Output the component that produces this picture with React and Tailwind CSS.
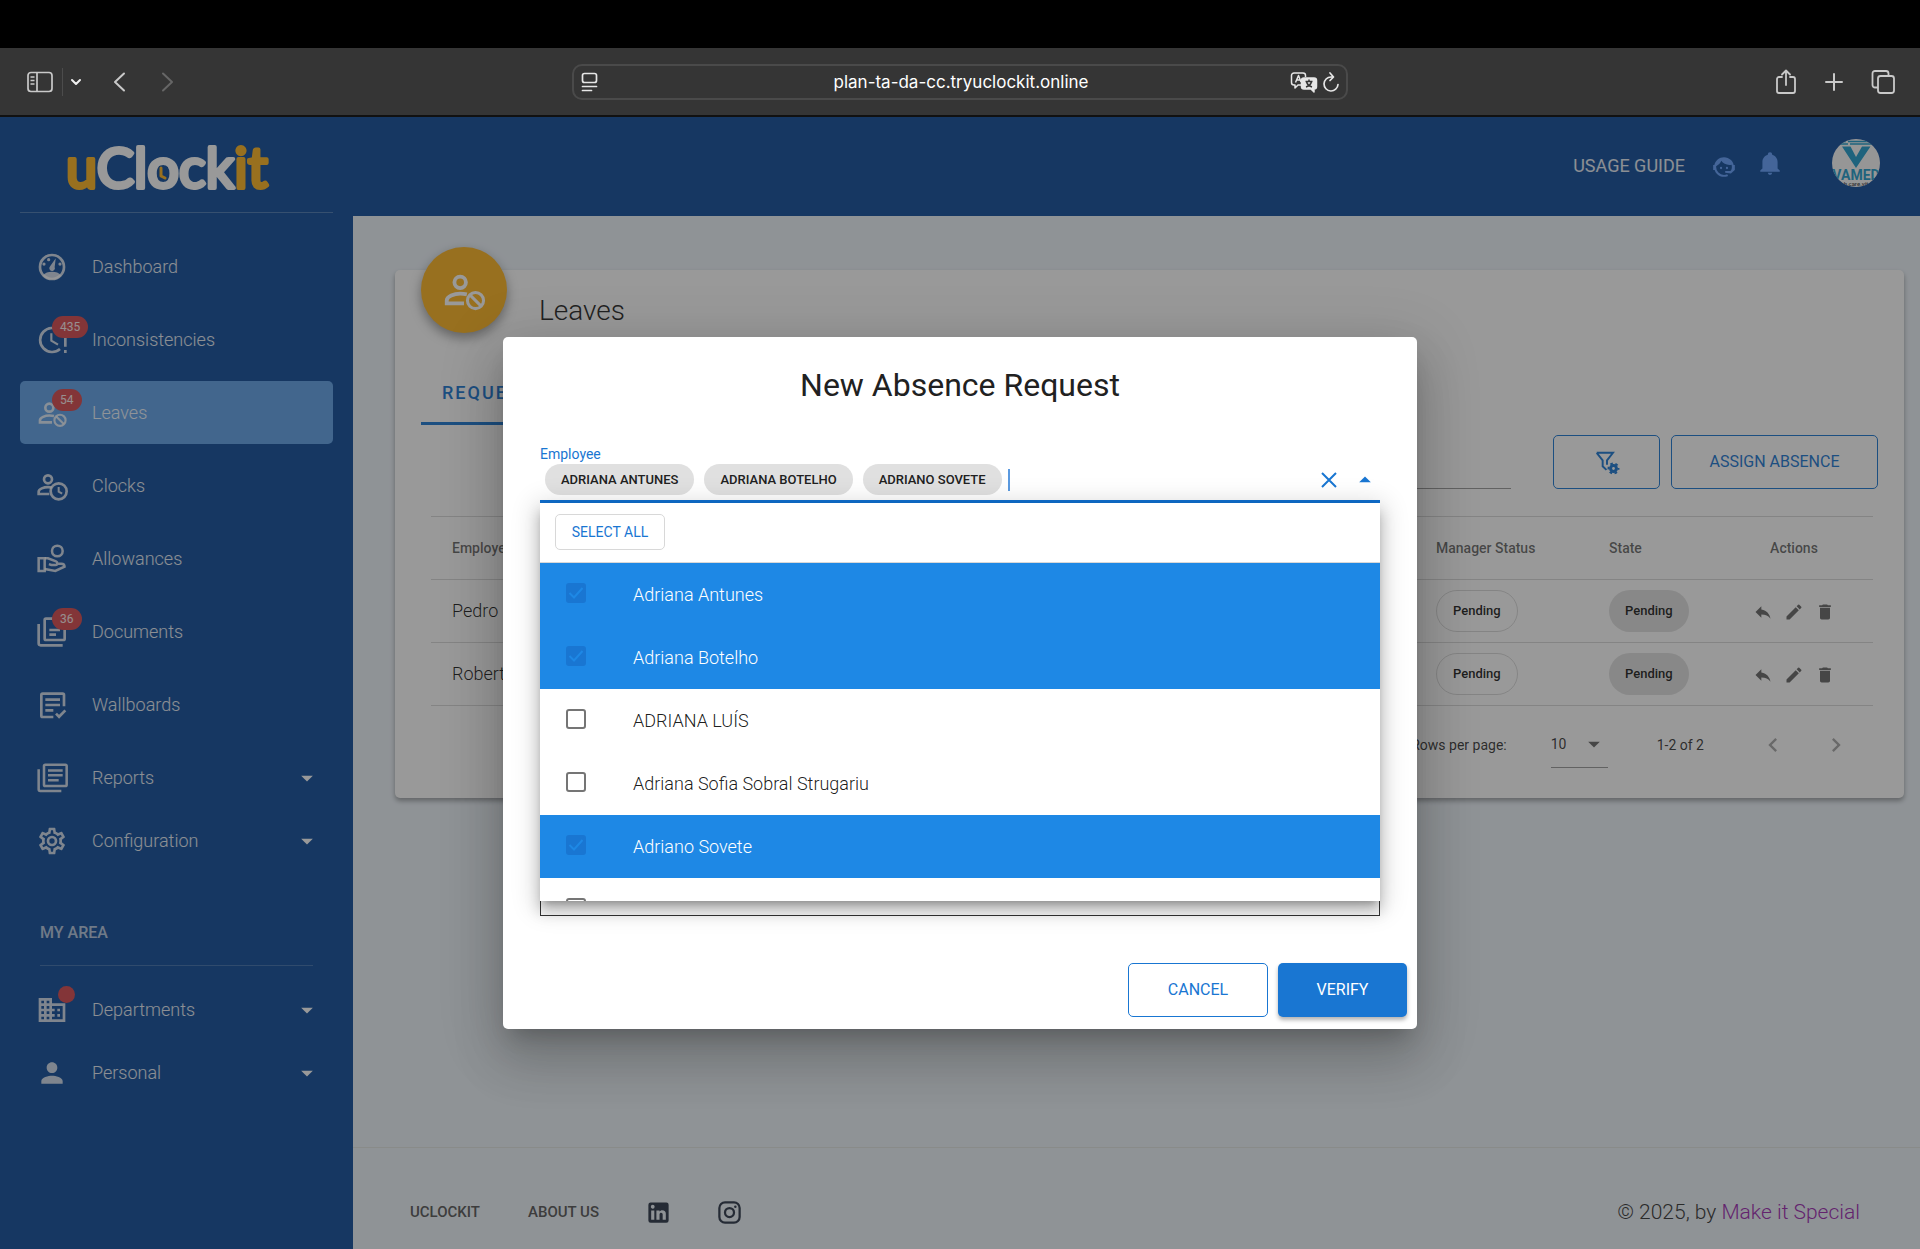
import React, { useState } from 'react';
import {
  MdArrowDropDown,
  MdArrowDropUp,
  MdChevronLeft,
  MdChevronRight,
  MdDelete,
  MdDomain,
  MdEdit,
  MdPerson,
  MdReply,
} from 'react-icons/md';

// Small wrapper for the outlined 24x24 icons
function Icon({ className, width = 2, children }) {
  return (
    <svg viewBox="0 0 24 24" className={className} fill="none" stroke="currentColor" strokeWidth={width} aria-hidden="true">
      {children}
    </svg>
  );
}

function GaugeIcon({ className }) {
  return (
    <Icon className={className}>
      <circle cx="12" cy="12" r="9" />
      <path d="M5 18.5c2-2.300 4-2.900 7-2.900s5 .6 7 2.900c-2 2.200-4 2.900-7 2.900s-5-.7-7-2.900z" fill="currentColor" stroke="none" />
      <path d="M14.8 5.500 14 12a2.100 2.100 0 1 1-3.400-.6z" fill="currentColor" stroke="none" />
      <g fill="currentColor" stroke="none">
        <circle cx="6" cy="9.8" r="1.2" />
        <circle cx="9.5" cy="6.5" r="1.2" />
        <circle cx="18" cy="9.8" r="1.2" />
      </g>
    </Icon>
  );
}

function ClockAlertIcon({ className }) {
  return (
    <Icon className={className}>
      <path d="M18 5.2A9 9 0 1 0 18 18.8" />
      <path d="M11.5 7v5.500l5 3" strokeWidth="1.600" />
      <path d="M22 9v8M22 19.5v2.300" />
    </Icon>
  );
}

function PersonCancelIcon({ className }) {
  return (
    <Icon className={className}>
      <circle cx="10" cy="8" r="3" />
      <path d="M13.5 14.3C12.400 14.050 11.200 13.900 10 13.900c-3.100 0-7 1.500-7 3.600V19h9" />
      <circle cx="18" cy="17.5" r="4.2" strokeWidth="1.600" />
      <path d="m15.2 14.7 5.600 5.600" strokeWidth="1.600" />
    </Icon>
  );
}

function PersonClockIcon({ className }) {
  return (
    <Icon className={className}>
      <circle cx="9" cy="7" r="3" />
      <path d="M12 13.1c-1-.2-2-.3-3-.3-3.100 0-7 1.400-7 3.500V18h8" />
      <circle cx="17" cy="16" r="6" />
      <path d="M17 12.8V16.200l2.600 1.500" strokeWidth="1.500" />
    </Icon>
  );
}

function HandCoinIcon({ className }) {
  return (
    <Icon className={className} width="1.900">
      <circle cx="16" cy="6" r="4" />
      <path d="M2 11.5h4.500V21H2z" />
      <path d="M6.5 11.5H9l6 2.300c1.200.5 1.500 2.700-.4 2.700H11.500l-1.800-.7M15.800 15.500H19c1.500 0 2.400 1 2.400 2.300L14.500 21 6.500 19.500" />
    </Icon>
  );
}

function DocumentsIcon({ className }) {
  return (
    <Icon className={className}>
      <path d="M2 6v14.500c0 .8.500 1.500 1.500 1.500H20" />
      <path d="M7.5 2H16l5.500 5.500V17c0 .6-.4 1-1 1h-13c-.6 0-1-.4-1-1V3c0-.6.4-1 1-1z" />
      <path d="M10 10.5h8M10 14h5" />
    </Icon>
  );
}

function WallboardsIcon({ className }) {
  return (
    <Icon className={className}>
      <path d="M13 21H5c-.6 0-1-.4-1-1V4.500c0-.6.4-1 1-1h15c.6 0 1 .4 1 1V13" />
      <path d="M7 8h11M7 12h11M7 16h6M15 18.5l2.300 2.300L22 16" />
    </Icon>
  );
}

function ReportsIcon({ className }) {
  return (
    <Icon className={className} width="1.900">
      <path d="M2 5.5v15c0 .7.4 1.200 1.200 1.200H19" />
      <rect x="6" y="2" width="17" height="16" rx="1" />
      <path d="M9 6.3h11M9 10h11M9 13.700h8" />
    </Icon>
  );
}

function CogIcon({ className }) {
  return (
    <svg viewBox="0 0 24 24" className={className} fill="currentColor" aria-hidden="true">
      <path d="M12,8A4,4 0 0,1 16,12A4,4 0 0,1 12,16A4,4 0 0,1 8,12A4,4 0 0,1 12,8M12,10A2,2 0 0,0 10,12A2,2 0 0,0 12,14A2,2 0 0,0 14,12A2,2 0 0,0 12,10M10,22C9.75,22 9.54,21.82 9.5,21.58L9.13,18.93C8.5,18.68 7.96,18.34 7.44,17.94L4.95,18.95C4.73,19.03 4.46,18.95 4.34,18.73L2.34,15.27C2.21,15.05 2.27,14.78 2.46,14.63L4.57,12.97L4.5,12L4.57,11L2.46,9.37C2.27,9.22 2.21,8.95 2.34,8.73L4.34,5.27C4.46,5.05 4.73,4.96 4.95,5.05L7.44,6.05C7.96,5.66 8.5,5.32 9.13,5.07L9.5,2.42C9.54,2.18 9.75,2 10,2H14C14.25,2 14.46,2.18 14.5,2.42L14.87,5.07C15.5,5.32 16.04,5.66 16.56,6.05L19.05,5.05C19.27,4.96 19.54,5.05 19.66,5.27L21.66,8.73C21.79,8.95 21.73,9.22 21.54,9.37L19.43,11L19.5,12L19.43,13L21.54,14.63C21.73,14.78 21.79,15.05 21.66,15.27L19.66,18.73C19.54,18.95 19.27,19.04 19.05,18.95L16.56,17.95C16.04,18.34 15.5,18.68 14.87,18.93L14.5,21.58C14.46,21.82 14.25,22 14,22H10M11.25,4L10.88,6.61C9.68,6.86 8.62,7.5 7.85,8.39L5.44,7.35L4.69,8.65L6.8,10.2C6.4,11.37 6.4,12.64 6.8,13.8L4.68,15.36L5.43,16.66L7.86,15.62C8.63,16.5 9.68,17.14 10.87,17.38L11.24,20H12.76L13.13,17.39C14.32,17.14 15.37,16.5 16.14,15.62L18.57,16.66L19.32,15.36L17.2,13.81C17.6,12.64 17.6,11.37 17.2,10.2L19.31,8.65L18.56,7.35L16.15,8.39C15.38,7.5 14.32,6.86 13.12,6.62L12.75,4H11.25Z" />
    </svg>
  );
}

function AgentIcon({ className }) {
  return (
    <svg viewBox="0 0 24 24" className={className} fill="currentColor" aria-hidden="true">
      <path d="M18.72,14.76C19.07,13.91 19.26,13 19.26,12C19.26,11.28 19.15,10.59 18.96,9.95C18.31,10.1 17.63,10.18 16.92,10.18C13.86,10.18 11.15,8.67 9.5,6.34C8.61,8.5 6.91,10.26 4.77,11.22C4.73,11.47 4.73,11.74 4.73,12A7.27,7.27 0 0,0 12,19.27C13.05,19.27 14.06,19.04 14.97,18.63C15.54,19.72 15.8,20.26 15.78,20.26C14.14,20.81 12.87,21.08 12,21.08C9.58,21.08 7.27,20.13 5.57,18.42C4.53,17.38 3.76,16.11 3.33,14.73H2V10.18H3.09C3.93,6.04 7.6,2.92 12,2.92C14.4,2.92 16.71,3.87 18.42,5.58C19.69,6.84 20.54,8.45 20.89,10.18H22V14.73H21.94L18.38,18L13.08,17.4V15.73H17.91L18.72,14.76M9.27,11.77A1.14,1.14 0 0,1 9.27,14.04A1.14,1.14 0 0,1 9.27,11.77M14.72,11.77A1.14,1.14 0 0,1 14.72,14.04A1.14,1.14 0 0,1 14.72,11.77Z" />
    </svg>
  );
}

function BellIcon({ className }) {
  return (
    <svg viewBox="0 0 24 24" className={className} fill="currentColor" aria-hidden="true">
      <path d="M21,19V20H3V19L5,17V11C5,7.9 7.03,5.17 10,4.29C10,4.19 10,4.1 10,4A2,2 0 0,1 12,2A2,2 0 0,1 14,4C14,4.1 14,4.19 14,4.29C16.97,5.17 19,7.9 19,11V17L21,19M14,21A2,2 0 0,1 12,23A2,2 0 0,1 10,21" />
    </svg>
  );
}

function FilterCogIcon({ className }) {
  return (
    <Icon className={className} width="1.800">
      <path d="M2.5 3.5h15l-5.500 7v4M2.500 3.500l5.500 7v5.500l3.500 3.300" />
      <circle cx="18" cy="18" r="2.7" strokeWidth="2.800" />
      <circle cx="18" cy="18" r="4.6" strokeDasharray="2.4 2.417" strokeDashoffset="1.2" />
    </Icon>
  );
}

function Logo() {
  return (
    <svg viewBox="0 0 220 76" className="h-[76px] w-[220px]" role="img" aria-label="uClockit">
      <g fontFamily="Lato, sans-serif" fontWeight="400" fontSize="56" strokeWidth="4" strokeLinejoin="round">
        <text x="0" y="61">
          <tspan fill="#feb41e" stroke="#feb41e">u</tspan>
          <tspan fill="#fff" stroke="#fff">Clock</tspan>
          <tspan fill="#feb41e" stroke="#feb41e">it</tspan>
        </text>
      </g>
      <path d="M95 41v8l4 2" fill="none" stroke="#feb41e" strokeWidth="3" strokeLinecap="round" strokeLinejoin="round" />
    </svg>
  );
}

const mainNav = [
  { label: 'Dashboard', icon: GaugeIcon },
  { label: 'Inconsistencies', icon: ClockAlertIcon, badge: 435 },
  { label: 'Leaves', icon: PersonCancelIcon, badge: 54, active: true },
  { label: 'Clocks', icon: PersonClockIcon },
  { label: 'Allowances', icon: HandCoinIcon },
  { label: 'Documents', icon: DocumentsIcon, badge: 36 },
  { label: 'Wallboards', icon: WallboardsIcon },
];

const groupNav = [
  { label: 'Reports', icon: ReportsIcon, group: true },
  { label: 'Configuration', icon: CogIcon, group: true },
];

const myAreaNav = [
  { label: 'Departments', icon: MdDomain, group: true, dot: true },
  { label: 'Personal', icon: MdPerson, group: true },
];

const leaves = [
  { employee: 'Pedro', manager: 'Pending', state: 'Pending' },
  { employee: 'Roberto', manager: 'Pending', state: 'Pending' },
];

const employees = [
  { id: 1, name: 'Adriana Antunes' },
  { id: 2, name: 'Adriana Botelho' },
  { id: 3, name: 'ADRIANA LUÍS' },
  { id: 4, name: 'Adriana Sofia Sobral Strugariu' },
  { id: 5, name: 'Adriano Sovete' },
  { id: 6, name: '' },
];

function BrowserBar() {
  return (
    <div className="flex h-[69px] items-center justify-between border-b-2 border-[#111] bg-[#353535] px-6 text-[#c9c9c9]">
      <div className="flex w-[500px] items-center">
        <button type="button" aria-label="Sidebar">
          <svg viewBox="0 0 32 26" className="h-[26px] w-8" fill="none" stroke="currentColor" strokeWidth="1.700" aria-hidden="true">
            <rect x="4" y="3.5" width="24" height="19" rx="3" />
            <path d="M13 3.5v19" />
            <path d="M6.500 8h4M6.500 11.500h4M6.500 15h4" strokeWidth="1.400" />
          </svg>
        </button>
        <span className="mr-[7px] ml-1.5 h-7 w-px bg-[#4c4c4c]" />
        <button type="button" aria-label="Tab groups">
          <svg viewBox="0 0 12 12" className="h-3 w-3" fill="none" stroke="#f0f0f0" strokeWidth="2" strokeLinecap="round" strokeLinejoin="round" aria-hidden="true">
            <path d="M2 4l4 4 4-4" />
          </svg>
        </button>
        <button type="button" aria-label="Back" className="ml-7">
          <svg viewBox="0 0 20 26" className="h-[26px] w-5" fill="none" stroke="currentColor" strokeWidth="2" strokeLinecap="round" strokeLinejoin="round" aria-hidden="true">
            <path d="M14 4.500l-9 8.500 9 8.500" />
          </svg>
        </button>
        <button type="button" aria-label="Forward" className="ml-7">
          <svg viewBox="0 0 20 26" className="h-[26px] w-5" fill="none" stroke="#666" strokeWidth="2" strokeLinecap="round" strokeLinejoin="round" aria-hidden="true">
            <path d="M5 4.500l9 8.500-9 8.500" />
          </svg>
        </button>
      </div>

      <div className="flex h-9 w-[776px] items-center justify-between rounded-[10px] border-2 border-[#4a4a4a] px-1.5 text-[#e6e6e6]">
        <svg viewBox="0 0 20 22" className="h-[22px] w-5" fill="none" stroke="currentColor" strokeWidth="1.700" strokeLinecap="round" aria-hidden="true">
          <rect x="2.5" y="2.5" width="14" height="9" rx="2" />
          <path d="M2.500 15.500h14M2.500 19.500h9" />
        </svg>
        <span className="pt-0.5 pl-8 font-[Inter,sans-serif] text-[17px] text-white">plan-ta-da-cc.tryuclockit.online</span>
        <div className="flex items-center gap-1">
          <svg viewBox="0 0 28 22" className="h-[22px] w-7" fill="none" stroke="currentColor" strokeWidth="1.500" strokeLinejoin="round" aria-hidden="true">
            <path d="M12 14H8l-3 3v-3H4a2.500 2.500 0 0 1-2.500-2.500v-7A2.500 2.500 0 0 1 4 2h9a2.500 2.500 0 0 1 2.500 2.500V6" />
            <path d="M5.500 11.500l3-7 2.500 6.500M6.500 9h4" />
            <path d="M14 7h10a2.500 2.500 0 0 1 2.500 2.500v6A2.500 2.500 0 0 1 24 18v3l-3-3h-7a2.500 2.500 0 0 1-2.500-2.500v-6A2.500 2.500 0 0 1 14 7z" fill="currentColor" />
            <path d="M15.500 10.500h7M19 8.500v2M21.500 10.500c-.5 2.500-2.500 4.500-5.500 5.500M16.500 10.500c.5 2.500 2.500 4.500 5.500 5.500" stroke="#353535" strokeWidth="1.500" />
          </svg>
          <svg viewBox="0 0 18 22" className="h-[22px] w-[18px]" fill="none" stroke="currentColor" strokeWidth="1.700" strokeLinecap="round" strokeLinejoin="round" aria-hidden="true">
            <path d="M11 6H9a7 7 0 1 0 7 7.500M8 2l3.500 4L8 9.500" />
          </svg>
        </div>
      </div>

      <div className="flex w-[500px] items-center justify-end gap-6">
        <button type="button" aria-label="Share">
          <svg viewBox="0 0 24 28" className="h-7 w-6" fill="none" stroke="currentColor" strokeWidth="1.800" strokeLinecap="round" strokeLinejoin="round" aria-hidden="true">
            <path d="M8 9H5a2 2 0 0 0-2 2v12a2 2 0 0 0 2 2h14a2 2 0 0 0 2-2V11a2 2 0 0 0-2-2h-3M12 17V3M8 6.500 12 2.500l4 4" />
          </svg>
        </button>
        <button type="button" aria-label="New tab">
          <svg viewBox="0 0 24 24" className="h-6 w-6" fill="none" stroke="currentColor" strokeWidth="2" strokeLinecap="round" aria-hidden="true">
            <path d="M12 4v16M4 12h16" />
          </svg>
        </button>
        <button type="button" aria-label="Tab overview">
          <svg viewBox="0 0 26 26" className="h-[26px] w-[26px]" fill="none" stroke="currentColor" strokeWidth="1.800" aria-hidden="true">
            <path d="M8 18.500H5a2.500 2.500 0 0 1-2.500-2.500V4.500A2.500 2.500 0 0 1 5 2h11a2.500 2.500 0 0 1 2.500 2.500V7" />
            <rect x="8" y="7" width="16" height="17" rx="2.5" />
          </svg>
        </button>
      </div>
    </div>
  );
}

function NavItem({ item }) {
  const ItemIcon = item.icon;
  return (
    <a
      href="#"
      className={
        item.active
          ? 'flex h-[63px] items-center rounded-[5px] bg-[#5ea1e9] pr-3 pl-4 text-white/90'
          : 'flex h-[63px] items-center rounded-[5px] pr-3 pl-4 text-white/90'
      }
    >
      <span className="relative mr-6 block">
        <ItemIcon className="h-8 w-8 text-white/80" />
        {item.badge && (
          <span className="absolute -top-2 left-4 flex h-[22px] items-center rounded-full bg-[#d7464c] px-2 text-xs">{item.badge}</span>
        )}
        {item.dot && <span className="absolute -top-2 left-[22px] h-[17px] w-[17px] rounded-full bg-[#d7464c]" />}
      </span>
      <span className="flex-1 text-lg font-light">{item.label}</span>
      {item.group && <MdArrowDropDown className="h-7 w-7 text-white" />}
    </a>
  );
}

function Sidebar() {
  return (
    <aside className="w-[353px] shrink-0 bg-[#0d4b9a] px-5">
      <div className="flex h-24 items-center border-b border-white/25 pl-[46px]">
        <Logo />
      </div>
      <nav className="pt-[22px]">
        <div className="flex flex-col gap-2.5">
          {mainNav.map(item => <NavItem key={item.label} item={item} />)}
        </div>
        <div className="mt-2.5">
          {groupNav.map(item => <NavItem key={item.label} item={item} />)}
        </div>
        <h2 className="mx-5 mt-7 flex h-[66px] items-center border-b border-white/20 text-base font-medium text-white/70">MY AREA</h2>
        <div className="mt-3">
          {myAreaNav.map(item => <NavItem key={item.label} item={item} />)}
        </div>
      </nav>
    </aside>
  );
}

function TopBar() {
  return (
    <header className="flex h-[99px] items-center justify-end bg-[#0d4b9a] pr-10 pb-1">
      <a href="#" className="pt-0.5 text-lg text-white/90">USAGE GUIDE</a>
      <button type="button" aria-label="Support" className="mt-1 ml-[26px] text-[#629fff]">
        <AgentIcon className="h-[26px] w-[26px]" />
      </button>
      <button type="button" aria-label="Notifications" className="mb-1 ml-5 text-[#629fff]">
        <BellIcon className="h-[26px] w-[26px]" />
      </button>
      <svg viewBox="0 0 48 48" className="mb-1 ml-[49px] h-12 w-12" role="img" aria-label="Vamed">
        <defs>
          <clipPath id="avatar">
            <circle cx="24" cy="24" r="24" />
          </clipPath>
        </defs>
        <g clipPath="url(#avatar)">
          <rect width="48" height="48" fill="#fafafa" />
          <path d="M10 2.500h4M16 2.500h26M7 5h9M18 5h24" stroke="#1e9ccc" strokeWidth="1.500" />
          <path d="M10 7.500h8.500L24 18l6-10.500h8.500L24 29z" fill="#1e9ccc" />
          <text x="24" y="41" textAnchor="middle" fontFamily="Roboto, sans-serif" fontWeight="700" fontSize="14" fill="#1e9ccc">VAMED</text>
          <text x="24" y="47" textAnchor="middle" fontFamily="Roboto, sans-serif" fontWeight="500" fontSize="6" fill="#444">h care.vit</text>
        </g>
      </svg>
    </header>
  );
}

function LeavesCard() {
  return (
    <section className="relative mt-[54px] mr-4 ml-[42px] h-[528px] rounded-[5px] bg-white px-[26px] shadow-[0_3px_5px_rgba(0,0,0,0.35)]">
      <div className="absolute -top-[23px] left-[26px] flex h-[86px] w-[86px] items-center justify-center rounded-full bg-[#feb41e] text-white shadow-[0_5px_12px_rgba(0,0,0,0.4)]">
        <PersonCancelIcon className="h-[46px] w-[46px]" />
      </div>
      <h1 className="ml-[118px] pt-[21px] text-[28px] leading-10 font-light text-[#222]">Leaves</h1>

      <div className="mt-[29px] flex">
        <button type="button" className="h-[65px] w-[180px] border-b-[3px] border-[#1976d2] pt-1 pl-[21px] text-left text-lg font-medium tracking-[2px] text-[#1976d2]">
          REQUESTS
        </button>
      </div>

      <div className="flex items-end justify-end pt-2.5">
        <input type="search" aria-label="Search" className="mr-[42px] h-10 w-[400px] border-b border-black/40 bg-transparent outline-none" />
        <button type="button" aria-label="Filters" className="mr-[11px] flex h-[54px] w-[107px] items-center justify-center rounded-[5px] border border-[#1976d2] text-[#1976d2]">
          <FilterCogIcon className="h-[26px] w-[26px]" />
        </button>
        <button type="button" className="h-[54px] w-[207px] rounded-[5px] border border-[#1976d2] text-base text-[#1976d2]">ASSIGN ABSENCE</button>
      </div>

      <div className="mt-[27px] mr-[5px] ml-[10px]">
        <table className="w-full table-fixed text-left">
          <colgroup>
            <col />
            <col className="w-[173px]" />
            <col className="w-[127px]" />
            <col className="w-[158px]" />
          </colgroup>
          <thead>
            <tr className="h-[63px] border-y border-black/15 text-sm text-black/60">
              <th className="px-[21px] font-medium">Employee</th>
              <th className="px-[21px] font-medium">Manager Status</th>
              <th className="px-[21px] font-medium">State</th>
              <th className="px-[21px] text-center font-medium">Actions</th>
            </tr>
          </thead>
          <tbody>
            {leaves.map(leave => (
              <tr key={leave.employee} className="h-[63px] border-b border-black/15">
                <td className="px-[21px] text-lg font-light">{leave.employee}</td>
                <td className="px-[21px]">
                  <span className="inline-flex h-[42px] items-center rounded-full border border-black/15 px-4 text-[13px] font-medium">{leave.manager}</span>
                </td>
                <td className="px-[21px]">
                  <span className="inline-flex h-[42px] items-center rounded-full bg-[#e0e0e0] px-4 text-[13px] font-medium">{leave.state}</span>
                </td>
                <td>
                  <div className="flex justify-center gap-[11px] pt-0.5 text-black/60">
                    <button type="button" aria-label="Reply"><MdReply className="h-5 w-5" /></button>
                    <button type="button" aria-label="Edit"><MdEdit className="h-5 w-5" /></button>
                    <button type="button" aria-label="Delete"><MdDelete className="h-5 w-5" /></button>
                  </div>
                </td>
              </tr>
            ))}
          </tbody>
        </table>

        <div className="flex h-[77px] items-center justify-end pr-[23px] text-sm text-black/80">
          <label htmlFor="rows">Rows per page:</label>
          <div className="relative ml-11 flex h-[46px] items-center border-b border-black/40">
            <select id="rows" className="w-[57px] appearance-none bg-transparent outline-none" defaultValue="10">
              <option>10</option>
              <option>25</option>
            </select>
            <MdArrowDropDown className="pointer-events-none absolute right-0 h-7 w-7 text-black/60" />
          </div>
          <span className="ml-[49px]">1-2 of 2</span>
          <button type="button" aria-label="Previous page" className="ml-[55px] text-black/35"><MdChevronLeft className="h-7 w-7" /></button>
          <button type="button" aria-label="Next page" className="ml-[35px] text-black/35"><MdChevronRight className="h-7 w-7" /></button>
        </div>
      </div>
    </section>
  );
}

function Footer() {
  return (
    <footer className="mt-auto flex h-[102px] items-center border-t border-[#e2e6e2] pt-7 pr-[60px] pl-[57px] text-[15px] font-medium text-[#555]">
      <a href="#">UCLOCKIT</a>
      <a href="#" className="ml-12">ABOUT US</a>
      <a href="#" aria-label="LinkedIn" className="ml-[46px] text-[#2a3547]">
        <svg viewBox="0 0 24 24" className="h-[27px] w-[27px]" fill="currentColor" aria-hidden="true">
          <path d="M19 3A2 2 0 0 1 21 5V19A2 2 0 0 1 19 21H5A2 2 0 0 1 3 19V5A2 2 0 0 1 5 3H19M18.500 18.500V13.200A3.260 3.260 0 0 0 15.240 9.940C14.390 9.940 13.400 10.460 12.920 11.240V10.130H10.130V18.500H12.920V13.570C12.920 12.800 13.540 12.170 14.310 12.170A1.400 1.400 0 0 1 15.710 13.570V18.500H18.500M6.880 8.560A1.680 1.680 0 0 0 8.560 6.880C8.560 5.950 7.810 5.190 6.880 5.190A1.690 1.690 0 0 0 5.190 6.880C5.190 7.810 5.950 8.560 6.880 8.560M8.270 18.500V10.130H5.500V18.500H8.270Z" />
        </svg>
      </a>
      <a href="#" aria-label="Instagram" className="ml-11 text-[#2a3547]">
        <Icon className="h-[27px] w-[27px]">
          <rect x="3" y="3" width="18" height="18" rx="5" />
          <circle cx="12" cy="12" r="4" />
          <circle cx="17.2" cy="6.8" r="1.1" fill="currentColor" stroke="none" />
        </Icon>
      </a>
      <p className="ml-auto text-[21px] font-light text-[#333]">
        © 2025, by <a href="#" className="text-[#9c27b0]">Make it Special</a>
      </p>
    </footer>
  );
}

function EmployeeOption({ employee, checked, onToggle }) {
  return (
    <label
      className={
        checked
          ? 'flex h-[63px] shrink-0 items-center bg-[#1e88e5] pl-[26px] text-white'
          : 'flex h-[63px] shrink-0 items-center bg-white pl-[26px] text-black/90'
      }
    >
      <span className="relative mr-[47px] mb-1 block h-5 w-5">
        <input
          type="checkbox"
          checked={checked}
          onChange={onToggle}
          className="block h-5 w-5 appearance-none rounded-[3px] border-2 border-[#757575] checked:border-[#1976d2] checked:bg-[#1976d2]"
        />
        {checked && (
          <svg viewBox="0 0 20 20" className="pointer-events-none absolute inset-0" fill="none" stroke="#1e88e5" strokeWidth="2" aria-hidden="true">
            <path d="M3.500 10l4.500 4.500L16.500 5" />
          </svg>
        )}
      </span>
      <span className="text-lg font-light">{employee.name}</span>
    </label>
  );
}

function AbsenceDialog() {
  const [selected, setSelected] = useState([1, 2, 5]);

  const toggle = (id) => {
    setSelected(prev => (prev.includes(id) ? prev.filter(item => item !== id) : [...prev, id].sort()));
  };

  return (
    <div role="dialog" aria-label="New Absence Request" className="flex h-[692px] w-[914px] flex-col rounded-[5px] bg-white px-[37px] shadow-[0_14px_20px_-9px_rgba(0,0,0,0.2),0_31px_50px_4px_rgba(0,0,0,0.14),0_12px_60px_10px_rgba(0,0,0,0.12)]">
      <h2 className="pt-[26px] text-center text-[32px] leading-[44px] text-[#212121]">New Absence Request</h2>

      <div className="relative mt-[37px]">
        <label htmlFor="employee" className="block text-sm leading-5 text-[#1976d2]">Employee</label>
        <div className="flex h-[39px] items-start border-b-[3px] border-[#1070d0] pl-[5px]">
          {employees.filter(e => selected.includes(e.id)).map(e => (
            <span key={e.id} className="mr-2.5 flex h-[31px] shrink-0 items-center rounded-full bg-[#e0e0e0] px-4 text-[13px] font-medium text-[#212121] uppercase">
              {e.name}
            </span>
          ))}
          <input id="employee" className="-ml-1 mt-[5px] h-[22px] w-10 flex-1 border-l-2 border-[#5b9ae0] outline-none" />
          <button type="button" aria-label="Clear" className="mt-1 mr-2.5 text-[#1976d2]">
            <Icon className="h-6 w-6">
              <path d="M5 5l14 14M19 5 5 19" />
            </Icon>
          </button>
          <button type="button" aria-label="Close list" className="mt-0.5 mr-px text-[#1976d2]">
            <MdArrowDropUp className="h-7 w-7" />
          </button>
        </div>

        <div className="absolute top-[59px] right-0 left-0 flex h-[398px] flex-col overflow-hidden bg-white shadow-[0_6px_7px_-4px_rgba(0,0,0,0.25),0_10px_13px_1px_rgba(0,0,0,0.18),0_4px_24px_5px_rgba(0,0,0,0.14)]">
          <div className="h-[60px] shrink-0 border-b border-[#d8d8d8] px-[15px] pt-[11px]">
            <button type="button" onClick={() => setSelected(employees.map(e => e.id))} className="h-9 w-[110px] rounded-[5px] border border-[#d8d8d8] text-sm text-[#1976d2]">
              SELECT ALL
            </button>
          </div>
          {employees.map(e => (
            <EmployeeOption key={e.id} employee={e} checked={selected.includes(e.id)} onToggle={() => toggle(e.id)} />
          ))}
        </div>
      </div>

      <textarea aria-label="Observations" className="mt-[213px] h-[200px] w-full resize-none border border-[#333] outline-none" />

      <div className="mt-[47px] -mr-[27px] flex justify-end gap-2.5">
        <button type="button" className="h-[54px] w-[140px] rounded-[5px] border border-[#1976d2] text-base text-[#1976d2]">CANCEL</button>
        <button type="button" className="h-[54px] w-[129px] rounded-[5px] bg-[#1976d2] text-base text-white shadow-[0_3px_4px_rgba(0,0,0,0.3)]">VERIFY</button>
      </div>
    </div>
  );
}

function App() {
  return (
    <div className="flex min-h-screen flex-col font-[Roboto,sans-serif] text-black/90">
      <div className="h-12 bg-black" />
      <BrowserBar />
      <div className="relative flex flex-1">
        <Sidebar />
        <div className="flex flex-1 flex-col bg-[#edf4fa]">
          <TopBar />
          <LeavesCard />
          <Footer />
        </div>
        <div className="absolute inset-0 flex items-center justify-center bg-[#212121]/46">
          <AbsenceDialog />
        </div>
      </div>
    </div>
  );
}

export default App;
